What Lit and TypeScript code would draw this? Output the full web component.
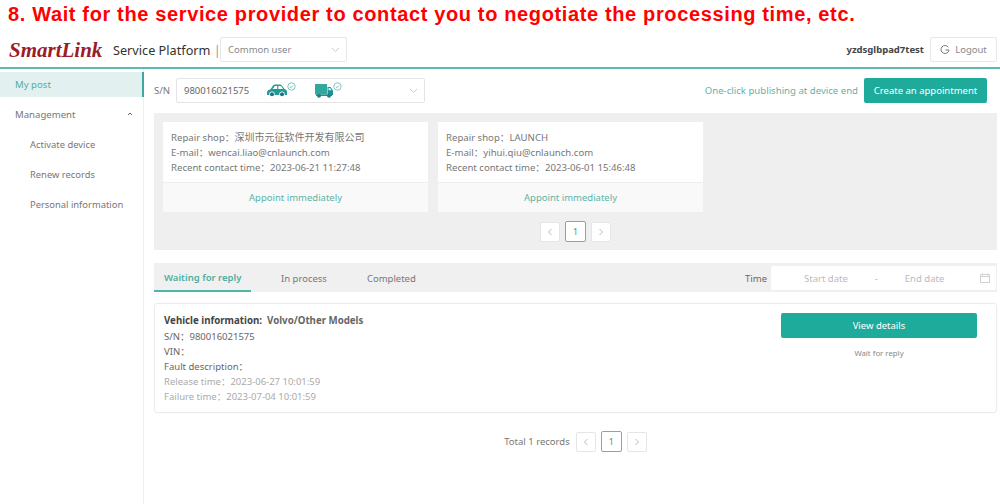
import { LitElement, html, css } from "lit";
import { customElement } from "lit/decorators.js";

const chevDown = html`<svg class="chev" width="9" height="6" viewBox="0 0 9 6"><path d="M1 1l3.5 3.5L8 1" fill="none" stroke="#c9cdcc" stroke-width="1"/></svg>`;
const check = html`<svg class="check" width="9" height="9" viewBox="0 0 9 9"><circle cx="4.5" cy="4.5" r="3.7" fill="none" stroke="#5fb9ae" stroke-width=".8"/><path d="M2.8 4.6l1.2 1.1 2-2.2" fill="none" stroke="#5fb9ae" stroke-width=".8"/></svg>`;

const pager = () => html`<div class="pager">
  <span class="pg"><svg width="6" height="8" viewBox="0 0 6 8"><path d="M4.5 1L1.5 4l3 3" fill="none" stroke="#bbb" stroke-width="1"/></svg></span>
  <span class="pg on">1</span>
  <span class="pg"><svg width="6" height="8" viewBox="0 0 6 8"><path d="M1.5 1l3 3-3 3" fill="none" stroke="#bbb" stroke-width="1"/></svg></span>
</div>`;

@customElement("app-root")
export class AppRoot extends LitElement {
  static styles = css`
    :host { display: block; width: 1000px; height: 504px; overflow: hidden; background: #fff; font-family: "Noto Sans", "Noto Sans CJK SC", sans-serif; font-size: 9.5px; color: #777; }
    * { box-sizing: border-box; }
    .title { height: 30px; padding: 2px 0 0 8px; font: bold 20px/24px "Liberation Sans", Arial, sans-serif; color: #f00; letter-spacing: 0.635px; white-space: nowrap; }
    header { height: 39px; border-bottom: 2px solid #5fb9ae; display: flex; align-items: center; padding: 2px 3px 0 9px; }
    .logo { font: italic bold 21px/22px "Liberation Serif", serif; color: #9c1c26; width: 95px; white-space: nowrap; }
    .plat { font-size: 12.7px; color: #333; white-space: nowrap; width: 107px; margin-left: 9px; }
    .pipe { color: #999; }
    .role { width: 127px; height: 25px; border: 1px solid #e8e8e8; border-radius: 2px; display: flex; align-items: center; justify-content: space-between; padding: 0 6px 0 7px; color: #888; }
    .user { margin-left: auto; font-weight: 700; color: #444; }
    .logout { width: 67px; height: 25px; margin-left: 6px; border: 1px solid #e8e8e8; border-radius: 2px; display: flex; align-items: center; justify-content: center; gap: 5px; color: #888; }
    .body { display: flex; height: 435px; }
    aside { width: 144px; flex: none; border-right: 1px solid #eee; padding-top: 3px; }
    .item { height: 30px; display: flex; align-items: center; padding-left: 15px; color: #777; font-size: 9.6px; }
    .item.active { height: 25px; margin-bottom: 2px; background: #e2f1ef; color: #53ad9f; border-right: 2px solid #3fa79b; margin-right: -1px; }
    .item.sub { padding-left: 30px; font-size: 9.4px; }
    .item.top { justify-content: space-between; padding-right: 10px; }
    main { flex: 1; padding: 9px 3px 0 10px; min-width: 0; }
    .toolbar { height: 25px; display: flex; align-items: center; }
    .sn { color: #777; width: 22px; }
    .snbox { width: 249px; height: 25px; border: 1px solid #e4e4e4; border-radius: 2px; display: flex; align-items: center; padding: 0 6px 0 7px; color: #666; }
    .snnum { width: 83px; }
    .ic { display: flex; align-items: flex-start; }
    .ic.car { width: 48px; }
    .check { margin-top: -2px; }
    .chev { display: block; }
    .snbox .chev { margin-left: auto; }
    .oneclick { margin-left: auto; color: #5fb3a8; font-size: 9.6px; }
    .create { width: 123px; height: 25px; margin-left: 6px; margin-right: 10px; background: #1fab9c; color: #fff; border-radius: 2px; display: flex; align-items: center; justify-content: center; }
    .panel { margin-top: 10px; height: 137px; background: #efefef; padding: 9px; }
    .cards { display: flex; gap: 10px; }
    .card { width: 265px; height: 90px; background: #fff; display: flex; flex-direction: column; }
    .info { height: 60px; padding: 8px 8px 0; line-height: 15px; color: #777; font-size: 9.6px; }
    .info div { white-space: nowrap; }
    .cn { font-size: 10px; }
    .act { height: 30px; background: #f8f9f8; border-top: 1px solid #eee; display: flex; align-items: center; justify-content: center; color: #5db3a7; }
    .pager { display: flex; justify-content: center; align-items: center; gap: 5px; }
    .pg { width: 20px; height: 20px; background: #fff; border: 1px solid #e6e6e6; border-radius: 2px; display: flex; align-items: center; justify-content: center; color: #666; }
    .pg.on { width: 21px; height: 21px; border-color: #5fb9ae; color: #4c9e94; }
    .panel .pager { margin-top: 9px; }
    .tabs { margin-top: 13px; height: 29px; background: #f0f0f0; display: flex; padding-left: 10px; }
    .tab { display: flex; align-items: center; color: #777; white-space: nowrap; padding-top: 2px; }
    .tab.on { color: #4fae9f; font-weight: 600; margin-left: -10px; padding: 2px 10px 0; border-bottom: 2px solid #4fb5a8; width: 97px; flex: none; }
    .tab.b { margin-left: 30px; }
    .tab.c { margin-left: 40px; }
    .time { margin-left: auto; align-self: center; color: #666; padding-top: 2px; }
    .range { width: 225px; height: 24px; margin: 0 1px 0 4px; padding-top: 1px; align-self: center; background: #fff; display: flex; align-items: center; color: #bbb; border-radius: 2px; }
    .range span:nth-child(1) { margin-left: 33px; }
    .range span:nth-child(2) { margin-left: 27px; }
    .range span:nth-child(3) { margin-left: 27px; }
    .range svg { margin-left: auto; margin-right: 6px; }
    .rec { margin-top: 11px; height: 110px; border: 1px solid #ececec; border-radius: 3px; display: flex; justify-content: space-between; padding: 9px 19px 0 9px; box-shadow: 0 0 2px rgba(0,0,0,.04); }
    .lines { line-height: 15px; color: #666; white-space: nowrap; }
    .lines .head { height: 16px; font-size: 9.7px; line-height: 16px; }
    .lines b { color: #444; font-weight: 700; }
    .lines .v { font-weight: 700; color: #666; }
    .lines .dim { color: #aaa; }
    .side { width: 196px; display: flex; flex-direction: column; align-items: center; }
    .view { width: 196px; height: 25px; background: #1fab9c; border-radius: 2px; color: #fff; display: flex; align-items: center; justify-content: center; }
    .wait { margin-top: 10px; font-size: 7.8px; color: #888; }
    .foot { margin-top: 18px; display: flex; justify-content: center; align-items: center; gap: 6px; color: #777; }
  `;

  render() {
    return html`
      <div class="title">8. Wait for the service provider to contact you to negotiate the processing time, etc.</div>
      <header>
        <div class="logo">SmartLink</div>
        <div class="plat">Service Platform <span class="pipe">|</span></div>
        <div class="role"><span>Common user</span>${chevDown}</div>
        <div class="user">yzdsglbpad7test</div>
        <div class="logout">
          <svg width="10" height="10" viewBox="0 0 10 10"><path d="M8.3 2.2A4 4 0 1 0 9 5H5.5" fill="none" stroke="#777" stroke-width="1"/></svg>
          <span>Logout</span>
        </div>
      </header>
      <div class="body">
        <aside>
          <div class="item active">My post</div>
          <div class="item top"><span>Management</span><svg width="6" height="4" viewBox="0 0 6 4"><path d="M1 3l2-2 2 2" fill="none" stroke="#666" stroke-width="1"/></svg></div>
          <div class="item sub">Activate device</div>
          <div class="item sub">Renew records</div>
          <div class="item sub">Personal information</div>
        </aside>
        <main>
          <div class="toolbar">
            <span class="sn">S/N</span>
            <div class="snbox">
              <span class="snnum">980016021575</span>
              <span class="ic car">
                <svg width="20" height="13" viewBox="0 0 20 13"><path d="M0 8.500C0 6.500 1.500 5.600 3.500 5.200L6 1.500C6.500.8 7.200.4 8.200.4h4.300c1 0 1.700.4 2.300 1.100l2.700 3.400c1.500.4 2.500 1.400 2.500 3V11H0z" fill="#1f9c92"/><path d="M7.800 2h2.400v3H5.600zM11.300 2h1.900c.6 0 1 .2 1.300.6L16 5h-4.700z" fill="#fff"/><circle cx="5" cy="10.300" r="2.700" fill="#fff"/><circle cx="5" cy="10.300" r="2" fill="#1f6f8c"/><circle cx="15" cy="10.300" r="2.700" fill="#fff"/><circle cx="15" cy="10.300" r="2" fill="#1f6f8c"/></svg>${check}
              </span>
              <span class="ic">
                <svg width="18" height="14" viewBox="0 0 18 14"><rect x="0" y="0" width="12" height="10.500" fill="#2fa99e"/><path d="M12.500 3H15.500L18 6.500V11h-5.500z" fill="#1f8f96"/><path d="M13.500 4h1.700l1.500 2.200h-3.200z" fill="#d5eeec"/><rect x="1" y="10.500" width="16" height="1.500" fill="#1f8f96"/><circle cx="4" cy="11.800" r="2" fill="#1f7f8c"/><circle cx="14" cy="11.800" r="2" fill="#1f7f8c"/></svg>${check}
              </span>
              ${chevDown}
            </div>
            <span class="oneclick">One-click publishing at device end</span>
            <div class="create">Create an appointment</div>
          </div>
          <section class="panel">
            <div class="cards">
              <div class="card">
                <div class="info">
                  <div>Repair shop：<span class="cn">深圳市元征软件开发有限公司</span></div>
                  <div>E-mail：wencai.liao@cnlaunch.com</div>
                  <div>Recent contact time：2023-06-21 11:27:48</div>
                </div>
                <div class="act">Appoint immediately</div>
              </div>
              <div class="card">
                <div class="info">
                  <div>Repair shop：LAUNCH</div>
                  <div>E-mail：yihui.qiu@cnlaunch.com</div>
                  <div>Recent contact time：2023-06-01 15:46:48</div>
                </div>
                <div class="act">Appoint immediately</div>
              </div>
            </div>
            ${pager()}
          </section>
          <nav class="tabs">
            <div class="tab on">Waiting for reply</div>
            <div class="tab b">In process</div>
            <div class="tab c">Completed</div>
            <span class="time">Time</span>
            <div class="range">
              <span>Start date</span><span>-</span><span>End date</span>
              <svg width="10" height="10" viewBox="0 0 10 10"><path d="M.5 1.500h9v8h-9zM.5 3.500h9M2.500.5v2M7.500.5v2" fill="none" stroke="#ccc" stroke-width=".9"/></svg>
            </div>
          </nav>
          <article class="rec">
            <div class="lines">
              <div class="head"><b>Vehicle information:</b>&nbsp; <span class="v">Volvo/Other Models</span></div>
              <div>S/N：980016021575</div>
              <div>VIN：</div>
              <div>Fault description：</div>
              <div class="dim">Release time：2023-06-27 10:01:59</div>
              <div class="dim">Failure time：2023-07-04 10:01:59</div>
            </div>
            <div class="side">
              <div class="view">View details</div>
              <div class="wait">Wait for reply</div>
            </div>
          </article>
          <div class="foot"><span>Total 1 records</span>${pager()}</div>
        </main>
      </div>
    `;
  }
}
